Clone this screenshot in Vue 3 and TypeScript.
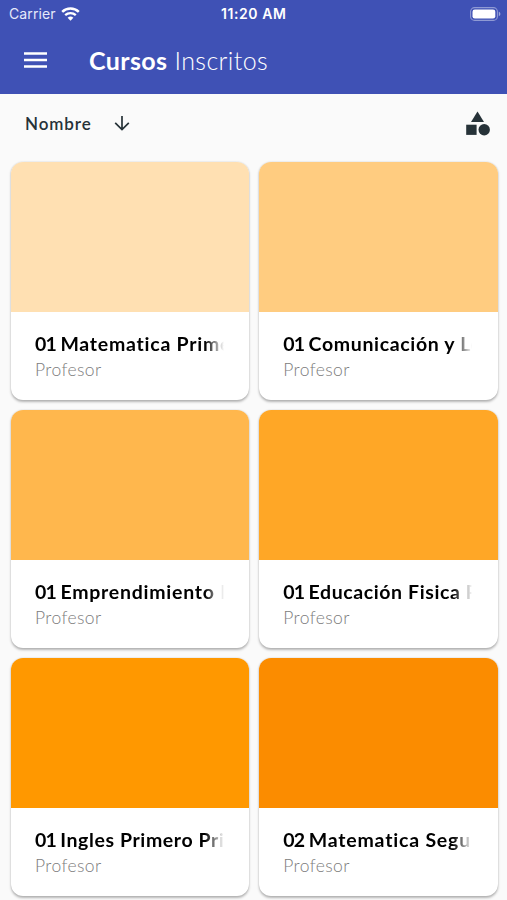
<script setup lang="ts">
interface Course {
  section: string
  title: string
  teacher: string
  color: string
  tracking: number
}

const courses: Course[] = [
  { section: '01', title: 'Matematica Primero', teacher: 'Profesor', color: '#ffe0b2', tracking: 0.75 },
  { section: '01', title: 'Comunicación y Lenguaje', teacher: 'Profesor', color: '#ffcc80', tracking: 0.65 },
  { section: '01', title: 'Emprendimiento Primero', teacher: 'Profesor', color: '#ffb74d', tracking: 0.75 },
  { section: '01', title: 'Educación Fisica Primero', teacher: 'Profesor', color: '#ffa726', tracking: 0.6 },
  { section: '01', title: 'Ingles Primero Primaria', teacher: 'Profesor', color: '#ff9800', tracking: 0.6 },
  { section: '02', title: 'Matematica Segundo', teacher: 'Profesor', color: '#fb8c00', tracking: 0.8 },
]
</script>

<template>
  <div class="screen">
    <header class="header">
      <div class="status">
        <div class="carrier">
          <span>Carrier</span>
          <svg class="wifi" width="19" height="14" viewBox="0 0 19 14">
            <path d="M1.2 4.9a12 12 0 0 1 16.6 0" fill="none" stroke="#fff" stroke-width="2.5" />
            <path d="M4.2 8.2a7.7 7.7 0 0 1 10.6 0" fill="none" stroke="#fff" stroke-width="2.3" />
            <path d="M9.5 13.7 6.6 10.8a4.3 4.3 0 0 1 5.8 0Z" fill="#fff" />
          </svg>
        </div>
        <span class="clock">11:20 AM</span>
        <svg class="battery" width="31" height="14" viewBox="0 0 31 14">
          <rect x=".6" y=".6" width="26.8" height="12.8" rx="4" fill="none" stroke="#fff" stroke-opacity=".42" stroke-width="1.1" />
          <rect x="2.5" y="2.4" width="22.8" height="9.2" rx="2.3" fill="#fff" />
          <path d="M28.8 4.8c2.1.7 2.1 3.7 0 4.4Z" fill="#fff" fill-opacity=".5" />
        </svg>
      </div>
      <div class="toolbar">
        <svg class="menu" width="23" height="16" viewBox="0 0 23 16">
          <path d="M0 1.4h23M0 8h23M0 14.6h23" stroke="#fff" stroke-width="2.5" />
        </svg>
        <h1 class="heading"><strong>Cursos</strong><span>Inscritos</span></h1>
      </div>
    </header>

    <div class="sortbar">
      <span class="sort">Nombre</span>
      <svg class="arrow" width="16" height="16" viewBox="0 0 16 16">
        <path d="M8 1v13.2M1.2 7.9 8 14.6l6.8-6.7" fill="none" stroke="#263238" stroke-width="1.7" />
      </svg>
      <svg class="shapes" width="25" height="25" viewBox="0 0 25 25">
        <path d="M12.5.5 19 11.1H6Z" />
        <path d="M1.2 13.7h10.4v10.2H1.2Z" />
        <circle cx="19.2" cy="18.7" r="5.7" />
      </svg>
    </div>

    <main class="grid">
      <article v-for="course in courses" :key="course.section + course.title" class="card">
        <div class="cover" :style="{ backgroundColor: course.color }"></div>
        <div class="info">
          <h2 class="title" :style="{ letterSpacing: course.tracking + 'px' }">
            <span class="section">{{ course.section }}</span>{{ ' ' + course.title }}
          </h2>
          <p class="teacher">{{ course.teacher }}</p>
        </div>
      </article>
    </main>
  </div>
</template>

<style>
body {
  margin: 0;
  overflow: hidden;
  background: #fafafa;
}
</style>

<style scoped>
.screen {
  width: 507px;
  height: 900px;
  overflow: hidden;
  background: #fafafa;
  font-family: Lato, 'Open Sans', sans-serif;
  font-variant-ligatures: none;
}

.header {
  height: 93.5px;
  background: #3f51b5;
  color: #fff;
}

.status {
  display: grid;
  grid-template-columns: 1fr auto 1fr;
  align-items: center;
  height: 27px;
  padding: 0 6px 0 9px;
  font-family: Inter, sans-serif;
  font-size: 14px;
  line-height: 27px;
}

.carrier {
  display: flex;
  align-items: center;
  gap: 5px;
  color: #e6e9fa;
  letter-spacing: 0.1px;
}

.clock {
  margin-right: 2.5px;
  font-weight: 600;
  letter-spacing: 0.55px;
}

.battery {
  justify-self: end;
}

.toolbar {
  display: flex;
  align-items: center;
  gap: 42px;
  height: 66px;
  padding-left: 24px;
}

.heading {
  display: flex;
  gap: 7px;
  margin: 0;
  font-size: 25px;
  font-weight: 300;
  line-height: 32px;
  letter-spacing: 0.4px;
}

.heading strong {
  font-weight: 700;
}

.sortbar {
  display: flex;
  align-items: center;
  height: 59px;
  padding: 0 17px 0 25px;
}

.sort {
  color: #263238;
  font-size: 17px;
  font-weight: 600;
  letter-spacing: 0.9px;
}

.arrow {
  margin-left: 22px;
}

.shapes {
  margin-left: auto;
  fill: #263238;
}

.grid {
  display: grid;
  grid-template-columns: 1fr 1fr;
  gap: 10px 9.5px;
  padding: 9px 9.5px 0 10.5px;
}

.card {
  height: 238px;
  overflow: hidden;
  border-radius: 12px;
  background: #fff;
  box-shadow: 0 1.5px 2.5px rgba(0, 0, 0, 0.28), 0 0 1.5px rgba(0, 0, 0, 0.12);
}

.cover {
  height: 150px;
}

.info {
  padding: 19px 25.5px 0 24.5px;
}

.title {
  margin: 0;
  overflow: hidden;
  color: #000;
  font-size: 19.5px;
  font-weight: 700;
  line-height: 26px;
  white-space: nowrap;
  -webkit-mask-image: linear-gradient(to right, #000 calc(100% - 19px), transparent);
  mask-image: linear-gradient(to right, #000 calc(100% - 19px), transparent);
}

.section {
  margin-right: -0.9px;
  letter-spacing: -0.9px;
}

.teacher {
  margin: 0;
  color: #7c7c7c;
  font-size: 17.5px;
  font-weight: 300;
  line-height: 25px;
  letter-spacing: 0.4px;
}
</style>
